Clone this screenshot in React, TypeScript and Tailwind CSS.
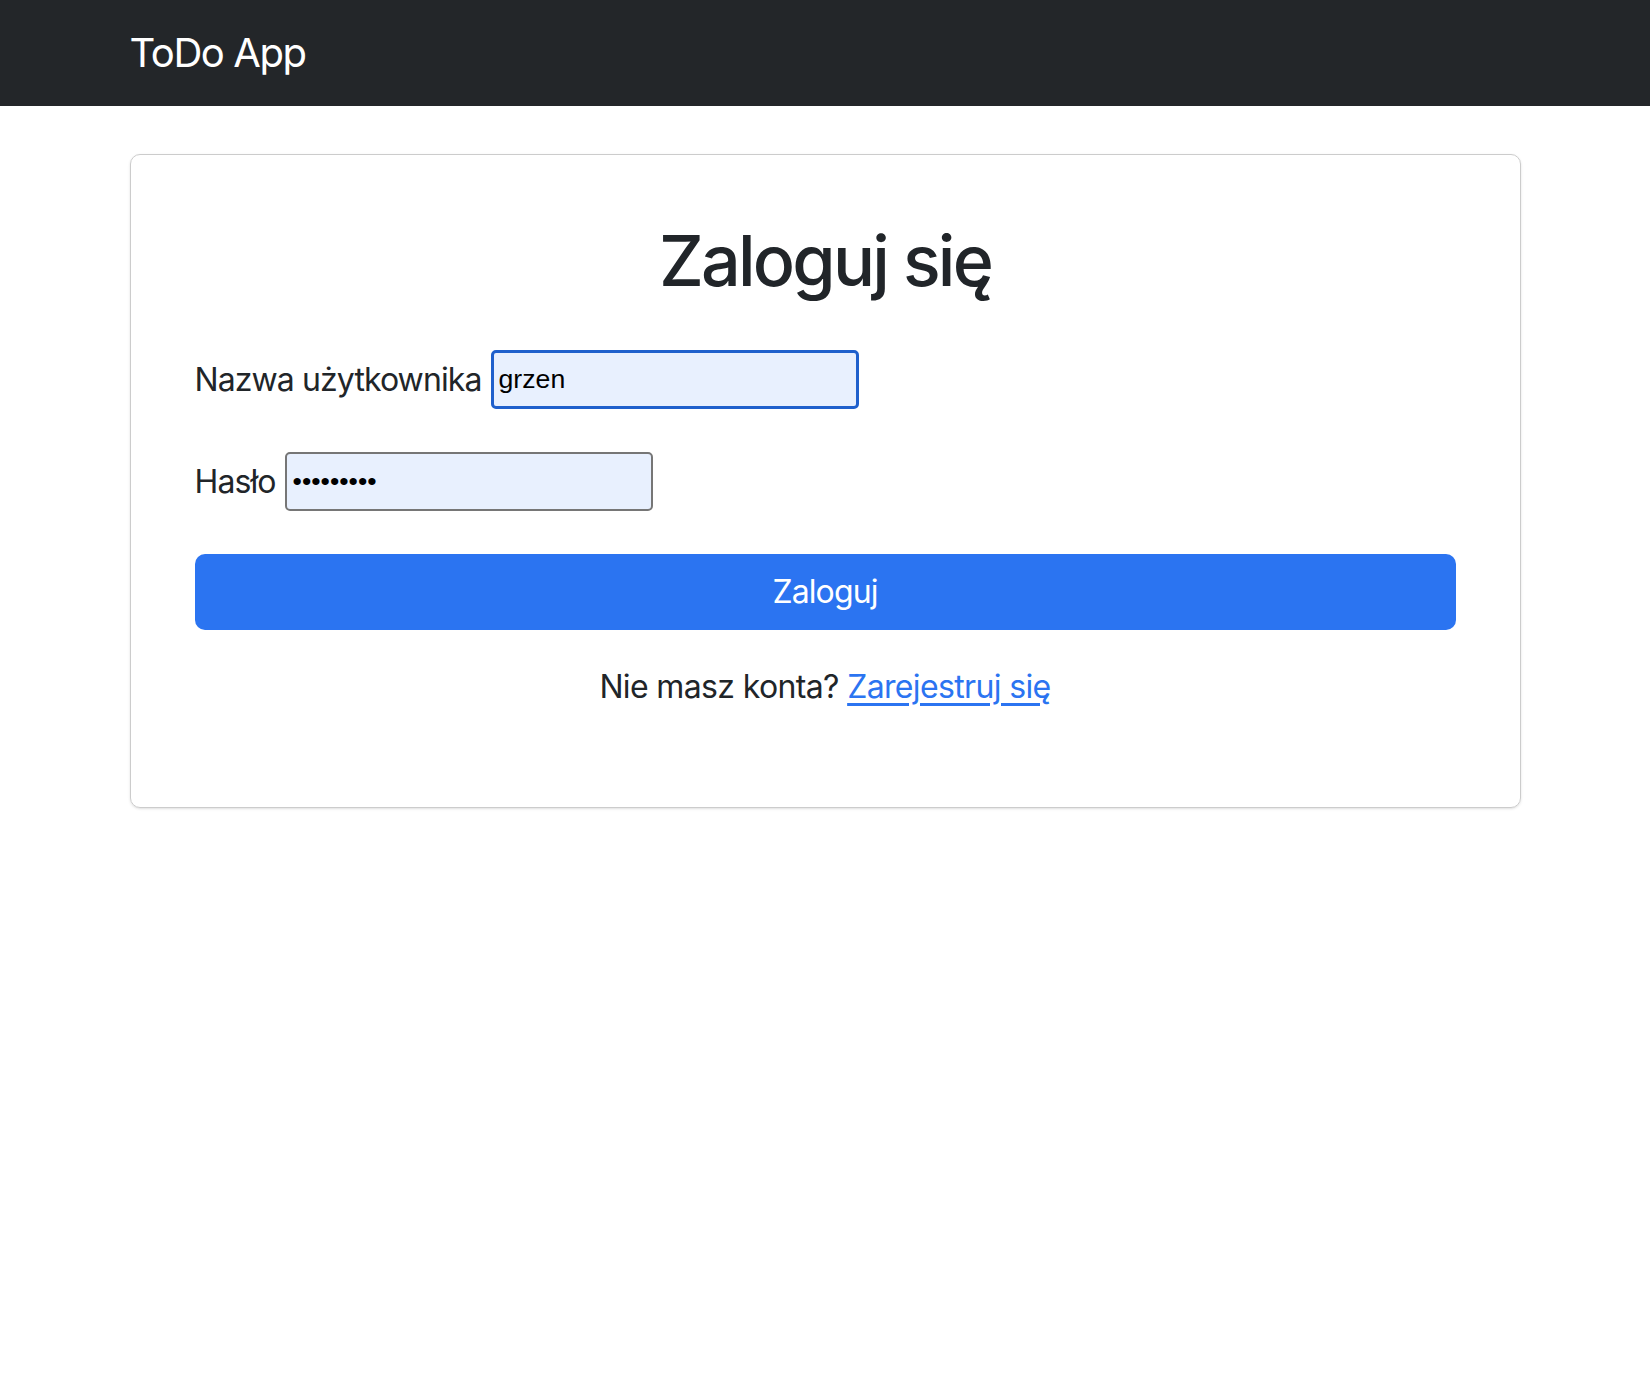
export default function App() {
  return (
    <div className="min-h-screen bg-white font-['Inter','Noto_Sans',sans-serif] text-[#212529]">
      <nav className="h-[106px] bg-[#232629] flex items-center">
        <div className="w-[1391px] mx-auto">
          <span className="text-[40px] leading-none tracking-[-0.035em] text-white">ToDo App</span>
        </div>
      </nav>
      <main className="w-[1391px] mx-auto mt-[48px]">
        <div className="border border-[#cccccc] rounded-[10px] shadow-sm px-[64px] pt-[64px] pb-[96px]">
          <h1 className="text-center text-[70px] leading-[1.2] font-medium tracking-[-0.04em] mb-[47px]">
            Zaloguj się
          </h1>
          <form className="flex flex-col text-[32px] tracking-[-0.028em]">
            <div className="flex items-center gap-[9px]">
              <label htmlFor="username">Nazwa użytkownika</label>
              <input
                id="username"
                defaultValue="grzen"
                className="w-[368px] h-[59px] border-[3px] border-[#1f60cc] rounded-[5px] bg-[#e8f0fe] px-[5px] text-[26.67px] tracking-normal text-black font-['Liberation_Sans',Arial,sans-serif] outline-none"
              />
            </div>
            <div className="flex items-center gap-[9px] mt-[43px]">
              <label htmlFor="password">Hasło</label>
              <input
                id="password"
                type="password"
                readOnly
                defaultValue="123456789"
                className="w-[368px] h-[59px] border-2 border-[#767676] rounded-[5px] bg-[#e8f0fe] px-[6px] text-[26.67px] tracking-normal text-black font-['Liberation_Sans',Arial,sans-serif] outline-none"
              />
            </div>
            <button
              type="button"
              className="mt-[43px] h-[76px] w-full rounded-[10px] bg-[#2b74f1] text-white"
            >
              Zaloguj
            </button>
          </form>
          <p className="mt-[33px] text-center text-[32px] leading-[1.5] tracking-[-0.02em]">
            Nie masz konta?{" "}
            <a href="#" className="text-[#2b74f1] underline underline-offset-[5px]">
              Zarejestruj się
            </a>
          </p>
        </div>
      </main>
    </div>
  );
}
